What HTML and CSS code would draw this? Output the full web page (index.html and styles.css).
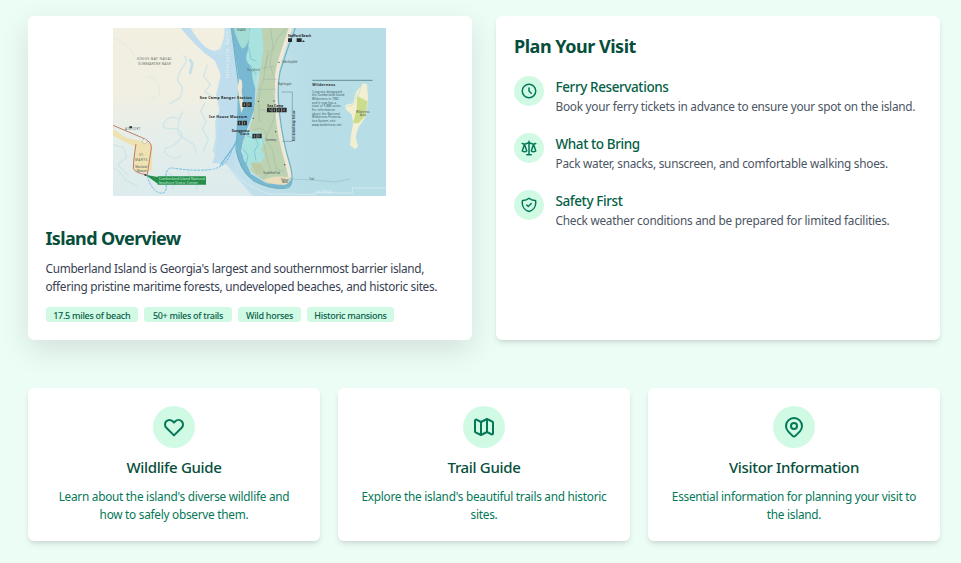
FILE: index.html
```
<!DOCTYPE html>
<html lang="en">
<head>
<meta charset="utf-8">
<title>Cumberland Island</title>
<link rel="stylesheet" href="styles.css">
</head>
<body>
<main class="page">
  <section class="overview-grid">
    <article class="card card-raised">
      <svg class="map" viewBox="0 0 819 504" role="img" aria-label="Island map">
        <defs>
          <linearGradient id="sea" x1="0" x2="1"><stop offset="0" stop-color="#c9e2ef"/><stop offset=".45" stop-color="#c3e0ed"/><stop offset=".75" stop-color="#b7dde6"/><stop offset="1" stop-color="#b7dde6"/></linearGradient>
          <linearGradient id="land" x1="0" x2="0" y1="0" y2="1"><stop offset="0" stop-color="#f2efe1"/><stop offset=".4" stop-color="#f0efe2"/><stop offset=".65" stop-color="#e5eeea"/><stop offset="1" stop-color="#dcebed"/></linearGradient>
          <filter id="soft"><feGaussianBlur stdDeviation="12"/></filter>
        </defs>
        <rect width="819" height="504" fill="url(#sea)"/>
        <path d="M610 0H819V504H700L620 400 580 220Z" fill="#b7dde6" filter="url(#soft)"/>
        <path d="M0 0H206Q235 40 275 76L304 95Q330 119 321 150L309 200 319 245 306 282 308 330 299 370 318 397Q350 413 362 440L420 504H0Z" fill="url(#land)"/>
        <path d="M232 0H334Q337 28 321 62Q302 76 278 58Q249 31 232 0Z" fill="#f2efe1"/>
        <path d="M203 0H232Q251 34 280 60L323 82 350 38V0H362L377 190 370 322 363 419Q337 404 298 406L310 370 313 290 323 240 314 195 326 148 306 98Q247 55 203 0Z" fill="#bfddec"/>
        <path d="M355 0H446L421 75 429 145 424 245 399 311 384 370 414 438 460 466Q530 472 536 450Q540 477 510 482Q458 482 410 450Q376 420 370 365L374 280 380 170Z" fill="#79b8d2"/>
        <path d="M363 0H409Q416 27 397 57L387 62Q370 35 363 0Z" fill="#a3ddd5"/>
        <path d="M412 0H450V140L432 137 430 187Q418 165 417 130L410 111Q393 97 404 70Z" fill="#a9e3df"/>
        <path d="M446 0H530Q512 57 494 108Q484 160 492 230Q497 320 522 408L534 449 517 470 467 467 417 432 397 393 389 340 407 309 420 268 430 200 443 121 451 61Z" fill="#bdd2b1"/>
        <path d="M401 314Q430 305 450 319L456 343 444 365 456 382 446 402 423 402 412 424 391 394 387 351Z" fill="#a9e3df"/>
        <path d="M412 403L446 410 458 436 430 438Z" fill="#bacba6"/>
        <path d="M450 457Q479 441 526 447Q539 461 517 470 479 472 450 457Z" fill="#e9ddbe"/>
        <path d="M533 0Q510 65 495 120Q483 180 491 248Q499 332 522 404L532 448" fill="none" stroke="#f0e8d8" stroke-width="11"/>
        <path d="M547 0Q521 66 501 132Q491 181 500 258Q508 336 533 417Q545 472 523 480Q475 486 424 460Q379 424 369 365L374 280 377 170 355 0" fill="none" stroke="#6fb2bc" stroke-width="3.5"/>
        <path d="M379 153Q392 153 386 190L392 237 385 255 379 219 374 177Z" fill="#eee9d5"/>
        <g fill="none" stroke="#9eb5a1" stroke-width="1.5"><path d="M473 0L480 60Q455 87 452 154Q432 190 439 282M519 0L492 35 478 71 470 107 484 149 486 265 458 332M452 154H491M444 121L484 115M434 184H487M439 244L488 252M424 305Q460 288 463 335H487M444 315L473 432 451 447M458 335L478 365 490 423 514 430M464 66L457 126"/></g>
        <path d="M407 56L414 94 431 99M411 110L430 141M401 323L429 334 436 350 424 369 429 398M390 363L405 382 400 409" fill="none" stroke="#7fc9d6" stroke-width="3"/>
        <g fill="none" stroke="#cfe5e8" stroke-width="4">
          <path d="M0 30Q43 44 55 70T91 106M101 147Q133 144 139 178T113 211" stroke="#e1eae5" stroke-width="3"/>
          <path d="M210 82Q229 92 211 115T194 160Q217 176 201 209L170 228M283 110L272 145 292 169 276 192 302 208M210 250Q191 280 196 319L243 350 251 376M198 273Q170 260 154 283T193 302Q220 322 193 343T158 359Q145 376 182 391L205 386M0 350L32 359 41 387 15 410 44 441M0 421Q26 430 39 458L74 473M276 225L263 249 280 282 268 302 286 334 269 374M224 423L231 451 260 461 247 489M166 435L192 457 177 485"/>
          <path d="M230 93L238 107 231 138" stroke="#c3e0ea" stroke-width="8"/>
        </g>
        <path d="M0 304L42 330 106 343Q121 352 117 370L117 426 96 436 61 425 61 391 68 358 0 323Z" fill="#eee1b2"/>
        <path d="M0 292L85 328Q118 341 115 360L103 440Q66 436 61 421Q61 397 69 348" fill="none" stroke="#b96453" stroke-width="2.5"/>
        <path d="M102 442Q111 478 134 493Q164 504 159 467Q154 417 179 420Q247 431 299 424Q343 414 356 368L377 320" fill="none" stroke="#6abce4" stroke-width="3" stroke-dasharray="8 3"/>
        <path d="M322 412L369 346" stroke="#77b8dc" stroke-width="4"/>
        <path d="M299 424Q340 420 365 437Q392 470 463 497L610 500" fill="none" stroke="#d6e9ef" stroke-width="3"/>
        <path d="M97 440L134 447V467Z M134 445H279V470H134Z" fill="#268d4d"/>
        <path d="M598 157H779" stroke="#3e656f" stroke-width="2"/>
        <path d="M506 192H538V340H508" fill="none" stroke="#5b8087" stroke-width="1.5"/>
        <path d="M751 166L762 169 765 207 760 263 735 301 728 326 735 356 726 364 711 352 715 315 721 285 716 260 699 244 697 231 719 226 728 193Z" fill="#f3efd3"/>
        <path d="M732 204L763 220 758 263 736 286 720 285 731 245Z" fill="#cbdc8b"/>
        <path d="M731 195L720 230 702 236M745 171L733 213" fill="none" stroke="#c0dfcf" stroke-width="2"/>
        <path d="M536 453L602 456 665 462 713 453" fill="none" stroke="#82aeb9" stroke-width="1.2"/>
        <path d="M600 495H718V480H819" fill="none" stroke="#e3f0f5" stroke-width="2"/>
        <g fill="#27292a"><path d="M525 31h12v11h-12zM551 31h15v11h-15zM570 36l6 6h-8zM388 223h28v14h-28zM462 239h59v14h-59zM374 278h28v14h-28zM418 317h28v14h-28zM49 295h8v5h-8z"/></g>
        <path d="M402 223v14M477 239v14M491 239v14M506 239v14M388 278v14M432 317v14M394 226v8M408 226v8M469 242l4 7M484 242v8M498 242v8M513 242v8M380 281v8M395 281v8M424 320v8M438 320v8" stroke="#b9c6bd" stroke-width="2"/>
        <g fill="#344338"><circle cx="436" cy="220" r="2"/><circle cx="421" cy="271" r="2"/><circle cx="483" cy="219" r="2"/><circle cx="488" cy="311" r="2"/><circle cx="515" cy="410" r="2"/><circle cx="97" cy="441" r="3"/><circle cx="498" cy="103" r="2"/></g>
        <circle cx="95" cy="340" r="7" fill="#f2efe4" stroke="#8b8b80"/>
        <g class="map-labels">
          <g class="place"><text x="72" y="97" textLength="105">KINGS BAY NAVAL</text><text x="75" y="112" textLength="99">SUBMARINE BASE</text></g>
          <g class="bold"><text x="260" y="214" textLength="157">Sea Camp Ranger Station</text><text x="288" y="270" textLength="114">Ice House Museum</text><text x="525" y="27" class="minor" textLength="69">Stafford Beach</text><text x="463" y="236" class="minor" textLength="48">Sea Camp</text><text x="356" y="313" class="minor" textLength="53">Dungeness</text><text x="382" y="322" class="minor" textLength="27">Dock</text><text x="598" y="173" textLength="68">Wilderness</text></g>
          <g class="tiny"><text x="508" y="104" textLength="45">Little Greyfield</text><text x="402" y="130" textLength="39">Greyfield</text><text x="494" y="171" textLength="42">Nightingale</text><text x="457" y="338" textLength="33">Cemetery</text><text x="451" y="438" textLength="50">South End Trail</text><text x="504" y="458" textLength="23">Pelican</text><text x="507" y="466" textLength="18">Banks</text><text x="589" y="457" textLength="14">Trail</text><text x="67" y="421" textLength="36">Mainland</text><text x="71" y="431" textLength="31">Museum</text><text x="36" y="306" textLength="46">AIRPORT</text><text x="79" y="385" textLength="13">ST.</text><text x="67" y="399" textLength="36">MARYS</text><text x="729" y="255" textLength="41">Wilderness</text><text x="741" y="263" textLength="18">Area</text><text x="371" y="9" textLength="28">ISLAND</text></g>
          <g class="copy"><text x="597" y="194" textLength="90">Congress designated</text><text x="597" y="205" textLength="97">the Cumberland Island</text><text x="597" y="216" textLength="80">Wilderness in 1982</text><text x="597" y="227" textLength="72">and it now has a</text><text x="597" y="238" textLength="88">total of 9,886 acres.</text><text x="597" y="249" textLength="69">For information</text><text x="597" y="260" textLength="84">about the National</text><text x="597" y="271" textLength="88">Wilderness Preserva-</text><text x="597" y="282" textLength="70">tion System, visit</text><text x="597" y="293" textLength="88">www.wilderness.net</text></g>
          <g class="green-label"><text x="137" y="456" textLength="139">Cumberland Island National</text><text x="137" y="467" textLength="118">Seashore Visitor Center</text></g>
          <text class="tiny dark" transform="translate(547 340) rotate(-90)" textLength="92">See detail map below</text>
          <text class="pale" transform="translate(609 494)" textLength="47">GEORGIA</text>
          <text class="pale" transform="translate(347 150) rotate(-90)" textLength="140">INTRACOASTAL WATER</text>
        </g>
      </svg>
      <h2>Island Overview</h2>
      <p class="intro">Cumberland Island is Georgia's largest and southernmost barrier island,<br>offering pristine maritime forests, undeveloped beaches, and historic sites.</p>
      <div class="tags"><span class="t1">17.5 miles of beach</span><span class="t2">50+ miles of trails</span><span class="t3">Wild horses</span><span class="t4">Historic mansions</span></div>
    </article>
    <article class="card plan">
      <h2>Plan Your Visit</h2>
      <div class="steps">
        <div class="step"><span class="dot"><svg viewBox="0 0 24 24"><path d="M12 8v4l3 3m6-3a9 9 0 11-18 0 9 9 0 0118 0z"/></svg></span><div><h3>Ferry Reservations</h3><p>Book your ferry tickets in advance to ensure your spot on the island.</p></div></div>
        <div class="step"><span class="dot"><svg viewBox="0 0 24 24"><path d="M3 6l3 1m0 0l-3 9a5.002 5.002 0 006.001 0M6 7l3 9M6 7l6-2m6 2l3-1m-3 1l-3 9a5.002 5.002 0 006.001 0M18 7l3 9m-3-9l-6-2m0-2v2m0 16V5m0 16H9m3 0h3"/></svg></span><div><h3>What to Bring</h3><p>Pack water, snacks, sunscreen, and comfortable walking shoes.</p></div></div>
        <div class="step"><span class="dot"><svg viewBox="0 0 24 24"><path d="M9 12l2 2 4-4m5.618-4.016A11.955 11.955 0 0112 2.944a11.955 11.955 0 01-8.618 3.04A12.02 12.02 0 003 9c0 5.591 3.824 10.29 9 11.622 5.176-1.332 9-6.03 9-11.622 0-1.042-.133-2.052-.382-3.016z"/></svg></span><div><h3>Safety First</h3><p>Check weather conditions and be prepared for limited facilities.</p></div></div>
      </div>
    </article>
  </section>
  <section class="guides">
    <article class="card guide"><span class="dot"><svg viewBox="0 0 24 24"><path d="M4.318 6.318a4.5 4.5 0 000 6.364L12 20.364l7.682-7.682a4.5 4.5 0 00-6.364-6.364L12 7.636l-1.318-1.318a4.5 4.5 0 00-6.364 0z"/></svg></span><h3>Wildlife Guide</h3><p>Learn about the island's diverse wildlife and<br>how to safely observe them.</p></article>
    <article class="card guide"><span class="dot"><svg viewBox="0 0 24 24"><path d="M9 20l-5.447-2.724A1 1 0 013 16.382V5.618a1 1 0 011.447-.894L9 7m0 13l6-3m-6 3V7m6 10l4.553 2.276A1 1 0 0021 18.382V7.618a1 1 0 00-.553-.894L15 4m0 13V4m0 0L9 7"/></svg></span><h3>Trail Guide</h3><p>Explore the island's beautiful trails and historic<br>sites.</p></article>
    <article class="card guide"><span class="dot"><svg viewBox="0 0 24 24"><path d="M17.657 16.657L13.414 20.9a1.998 1.998 0 01-2.827 0l-4.244-4.243a8 8 0 1111.314 0z"/><path d="M15 11a3 3 0 11-6 0 3 3 0 016 0z"/></svg></span><h3>Visitor Information</h3><p>Essential information for planning your visit to<br>the island.</p></article>
  </section>
</main>
</body>
</html>
```
FILE: styles.css
```
* { box-sizing: border-box; }
body { margin: 0; height: 563px; background: #ecfdf5; font-family: "Noto Sans", sans-serif; font-size: 11.8px; line-height: 18px; overflow: hidden; }
h2, h3, p { margin: 0; white-space: nowrap; }
.page { width: 940px; padding: 16px 0 0 28px; display: grid; grid-template-columns: minmax(0, 1fr); gap: 48px; }
.overview-grid { display: grid; grid-template-columns: repeat(2, minmax(0, 1fr)); gap: 24px; height: 324px; }
.card { position: relative; background: #fff; border-radius: 6px; padding: 18px; box-shadow: 0 4px 6px -1px rgba(0,0,0,.1), 0 2px 4px -2px rgba(0,0,0,.1); }
.card-raised { padding: 12px 17.5px 18px; box-shadow: 0 10px 30px rgba(0,0,0,.11); }
.map { display: block; width: 273px; height: 168px; margin: 0 0 30px 67.5px; }
.map-labels { font-size: 11px; fill: #252829; }
.map-labels .bold { font-weight: 700; }
.map-labels .minor { font-size: 9.5px; }
.map-labels .place { fill: #777b75; font-size: 11px; }
.map-labels .tiny { font-size: 8.5px; fill: #4c5d59; }
.map-labels .copy { font-size: 8.5px; fill: #31545e; }
.map-labels .dark { fill: #294149; font-weight: 700; }
.map-labels .pale { font-size: 9px; fill: #e9f3f7; }
.map-labels .green-label { font-size: 10.5px; fill: #c9efd3; }
h2 { color: #064e3b; font-size: 18px; line-height: 24px; font-weight: 700; letter-spacing: -.65px; }
.plan h2 { letter-spacing: -.48px; }
h3 { color: #065f46; font-size: 13.5px; line-height: 21px; font-weight: 500; letter-spacing: -.4px; }
.intro { margin-top: 9px; color: #374151; letter-spacing: -.3px; }
.tags { display: flex; gap: 6px; margin-top: 12px; }
.tags span { height: 15px; border-radius: 3px; background: #d1fae5; color: #065f46; font-size: 9px; font-weight: 500; line-height: 17px; letter-spacing: -.28px; text-align: center; white-space: nowrap; }
.t1 { width: 92.5px; } .t2 { width: 88px; } .t3 { width: 63px; } .t4 { width: 87px; }
.steps { display: grid; gap: 18px; margin-top: 18px; }
.step { display: flex; gap: 11.5px; height: 39px; }
.step h3 { line-height: 22px; }
.step p { margin-top: -1px; color: #4b5563; letter-spacing: -.25px; }
.dot { flex: none; display: flex; align-items: center; justify-content: center; width: 30px; height: 30px; border-radius: 50%; background: #d1fae5; }
.dot svg { width: 18px; height: 18px; fill: none; stroke: #047857; stroke-width: 2; stroke-linecap: round; stroke-linejoin: round; }
.guides { display: grid; grid-template-columns: repeat(3, minmax(0, 1fr)); gap: 18px; }
.guide { height: 153px; text-align: center; }
.guide .dot { width: 42px; height: 42px; margin: 0 auto 9px; }
.guide .dot svg { width: 24px; height: 24px; }
.guide h3 { font-size: 15px; color: #064e3b; letter-spacing: -.34px; }
.guide p { margin-top: 9px; color: #047857; letter-spacing: -.26px; }
```
